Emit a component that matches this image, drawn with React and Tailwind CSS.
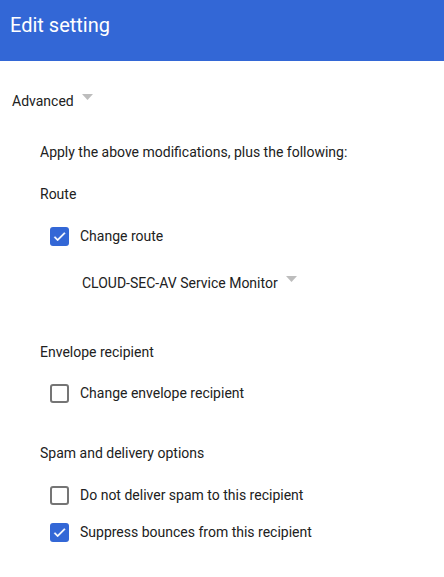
import React from "react";

function Check({ checked }) {
  if (checked) {
    return (
      <div className="w-[19px] h-[19px] rounded-[3px] bg-[#3367d6] flex items-center justify-center shrink-0">
        <svg width="15" height="15" viewBox="0 0 24 24">
          <path d="M9 16.17L4.83 12l-1.42 1.41L9 19 21 7l-1.41-1.41z" fill="#fff" stroke="#fff" strokeWidth="0.8" />
        </svg>
      </div>
    );
  }
  return <div className="w-[19px] h-[19px] rounded-[3px] border-2 border-[#757575] shrink-0" />;
}

function Tri() {
  return (
    <svg width="11" height="6" viewBox="0 0 11 6" className="shrink-0">
      <path d="M0 0h11L5.5 6z" fill="#bdbdbd" />
    </svg>
  );
}

function Row({ checked, label, mt }) {
  return (
    <div className={`flex items-center h-[20px] pl-[10px] ${mt}`}>
      <Check checked={checked} />
      <span className="ml-[11px] leading-[20px]">{label}</span>
    </div>
  );
}

export default function App() {
  return (
    <div className="w-[444px] h-[577px] bg-white text-[14px] text-[#212121] overflow-hidden" style={{ fontFamily: "Roboto, 'Noto Sans', sans-serif" }}>
      <div className="h-[61px] bg-[#3367d6] px-[10px] pt-[11px]">
        <div className="text-[20px] leading-[28px] text-white">Edit setting</div>
      </div>
      <div className="pl-[12px] mt-[30px] flex items-center h-[20px] gap-[8px]">
        <span>Advanced</span>
        <span className="-mt-[8px] flex"><Tri /></span>
      </div>
      <div className="pl-[40px]">
        <div className="mt-[31px] leading-[20px]">Apply the above modifications, plus the following:</div>
        <div className="mt-[22px] leading-[20px]">Route</div>
        <Row checked label="Change route" mt="mt-[22px]" />
        <div className="mt-[27px] pl-[42px] flex items-center h-[20px] gap-[8px]">
          <span>CLOUD-SEC-AV Service Monitor</span>
          <span className="-mt-[8px] flex"><Tri /></span>
        </div>
        <div className="mt-[49px] leading-[20px]">Envelope recipient</div>
        <Row checked={false} label="Change envelope recipient" mt="mt-[21px]" />
        <div className="mt-[40px] leading-[20px]">Spam and delivery options</div>
        <Row checked={false} label="Do not deliver spam to this recipient" mt="mt-[22px]" />
        <Row checked label="Suppress bounces from this recipient" mt="mt-[17px]" />
      </div>
    </div>
  );
}
